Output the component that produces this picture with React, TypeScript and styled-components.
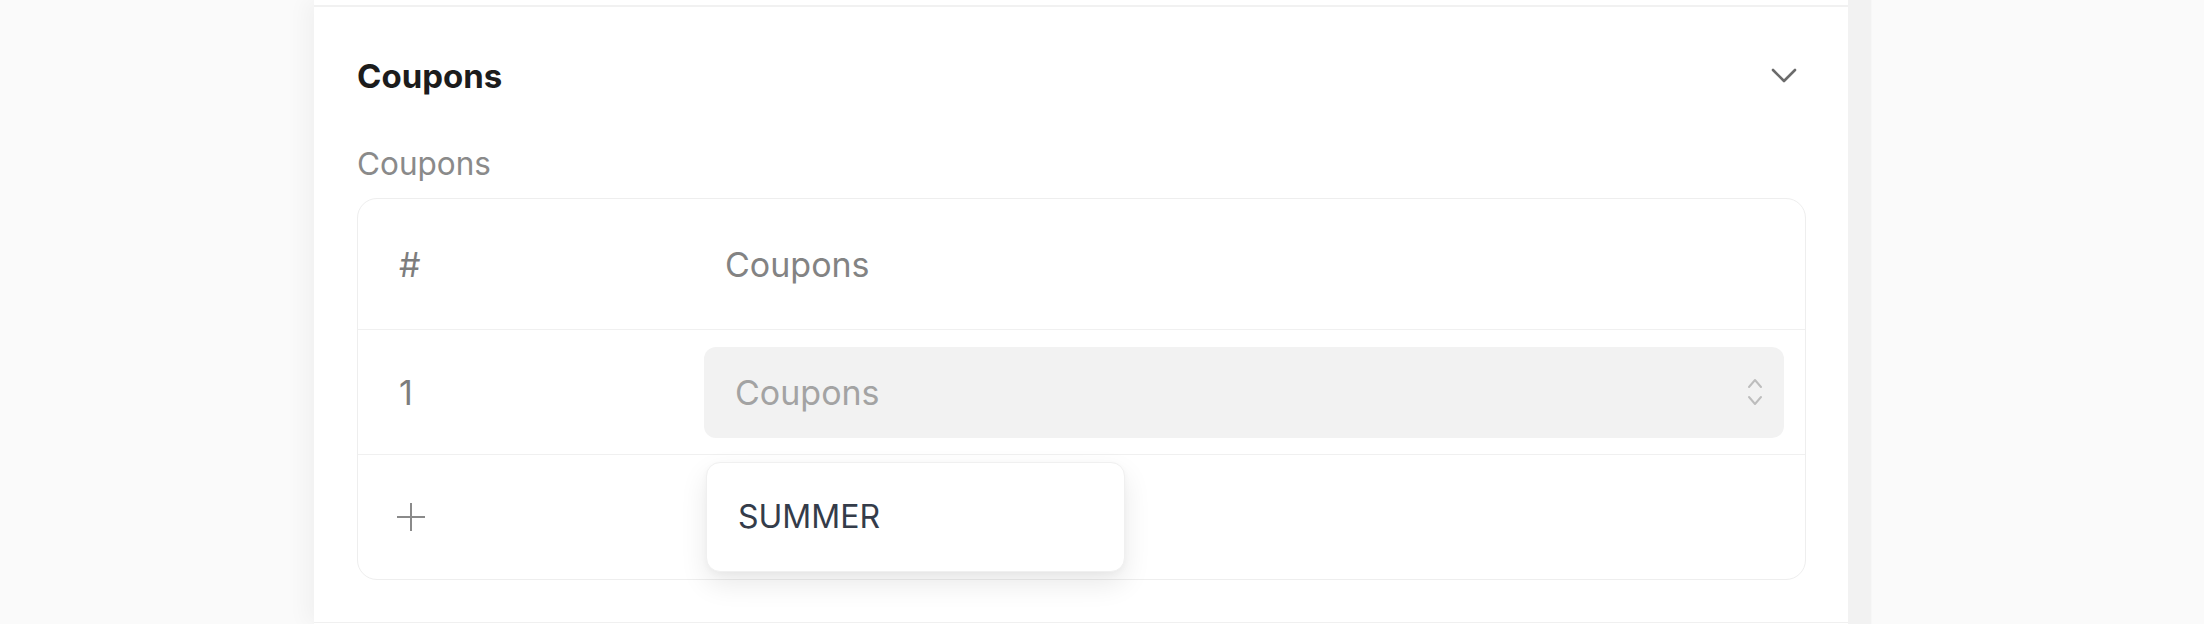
import React from "react";
import styled, { createGlobalStyle } from "styled-components";

const GlobalStyle = createGlobalStyle`
  html, body {
    margin: 0;
    padding: 0;
    background: #fafafa;
    font-family: Inter, "Noto Sans", "Liberation Sans", sans-serif;
    -webkit-font-smoothing: antialiased;
  }
  * { box-sizing: border-box; }
`;

const Layout = styled.div`
  display: flex;
  align-items: stretch;
  padding-left: 314px;
  min-height: 624px;
`;

const Card = styled.div`
  width: 1534px;
  background: #ffffff;
  box-shadow: -8px 0 20px rgba(0, 0, 0, 0.04);
  display: flex;
  flex-direction: column;
`;

const Gutter = styled.div`
  width: 24px;
  background: #f2f2f2;
  border-right: 1px solid #f7f7f7;
`;

const PrevSection = styled.div`
  height: 7px;
  border-bottom: 2px solid #f1f1f1;
`;

const Section = styled.section`
  padding: 49px 42px 42px 43px;
  border-bottom: 1px solid #f0f0f0;
  display: flex;
  flex-direction: column;
`;

const SectionHeader = styled.div`
  height: 40px;
  display: flex;
  align-items: center;
  justify-content: space-between;
  padding-right: 9px;
`;

const SectionTitle = styled.h2`
  margin: 0;
  font-size: 33px;
  line-height: 40px;
  font-weight: 650;
  color: #1c1c1c;
`;

const FieldLabel = styled.div`
  margin-top: 48px;
  font-size: 31.5px;
  line-height: 40px;
  color: #8a8a8a;
`;

const Table = styled.div`
  margin-top: 14px;
  border: 1px solid #eeeeee;
  border-radius: 20px;
  display: flex;
  flex-direction: column;
`;

const Row = styled.div<{ $h: number; $last?: boolean }>`
  display: grid;
  grid-template-columns: 346px 1fr;
  height: ${(p) => p.$h}px;
  align-items: center;
  border-bottom: ${(p) => (p.$last ? "none" : "1px solid #f0f0f0")};
`;

const IndexCell = styled.div<{ $pad?: number }>`
  padding-left: ${(p) => p.$pad ?? 41}px;
  font-size: 34px;
  color: #7d7d7d;
  display: flex;
  align-items: center;
`;

const HeadCell = styled.div`
  padding-left: 21px;
  font-size: 34px;
  color: #838383;
`;

const SelectCell = styled.div`
  position: relative;
  padding-right: 21px;
`;

const SelectBox = styled.div`
  height: 91px;
  border-radius: 12px;
  background: #f2f2f2;
  display: flex;
  align-items: center;
  justify-content: space-between;
  padding: 0 21px 0 31px;
`;

const Placeholder = styled.span`
  font-size: 34px;
  color: #a3a3a3;
`;

const Menu = styled.div`
  position: absolute;
  left: 2px;
  top: 115px;
  width: 419px;
  height: 110px;
  background: #ffffff;
  border: 1px solid #f0f0f0;
  border-radius: 14px;
  box-shadow: 0 12px 28px rgba(0, 0, 0, 0.09), 0 2px 6px rgba(0, 0, 0, 0.03);
  display: flex;
  align-items: center;
  padding-left: 31px;
  z-index: 2;
`;

const MenuItem = styled.div`
  font-size: 32px;
  color: #343c4a;
`;

const ChevronDown = () => (
  <svg width="26" height="16" viewBox="0 0 26 16" fill="none">
    <polyline
      points="2,2 13,13 24,2"
      stroke="#6b6b6b"
      strokeWidth="2.6"
      strokeLinecap="round"
      strokeLinejoin="round"
    />
  </svg>
);

const UpDown = () => (
  <svg width="16" height="30" viewBox="0 0 16 30" fill="none">
    <polyline points="2,10 8,3 14,10" stroke="#bdbdbd" strokeWidth="2" strokeLinecap="round" strokeLinejoin="round" />
    <polyline points="2,20 8,27 14,20" stroke="#bdbdbd" strokeWidth="2" strokeLinecap="round" strokeLinejoin="round" />
  </svg>
);

const PlusIcon = () => (
  <svg width="28" height="28" viewBox="0 0 28 28" fill="none">
    <line x1="0" y1="14" x2="28" y2="14" stroke="#8a8a8a" strokeWidth="2" />
    <line x1="14" y1="0" x2="14" y2="28" stroke="#8a8a8a" strokeWidth="2" />
  </svg>
);

export default function App() {
  return (
    <>
      <GlobalStyle />
      <Layout>
        <Card>
          <PrevSection />
          <Section>
            <SectionHeader>
              <SectionTitle>Coupons</SectionTitle>
              <ChevronDown />
            </SectionHeader>
            <FieldLabel>Coupons</FieldLabel>
            <Table>
              <Row $h={131}>
                <IndexCell>#</IndexCell>
                <HeadCell>Coupons</HeadCell>
              </Row>
              <Row $h={125}>
                <IndexCell>1</IndexCell>
                <SelectCell>
                  <SelectBox>
                    <Placeholder>Coupons</Placeholder>
                    <UpDown />
                  </SelectBox>
                  <Menu>
                    <MenuItem>SUMMER</MenuItem>
                  </Menu>
                </SelectCell>
              </Row>
              <Row $h={124} $last>
                <IndexCell $pad={39}>
                  <PlusIcon />
                </IndexCell>
                <div />
              </Row>
            </Table>
          </Section>
        </Card>
        <Gutter />
      </Layout>
    </>
  );
}
